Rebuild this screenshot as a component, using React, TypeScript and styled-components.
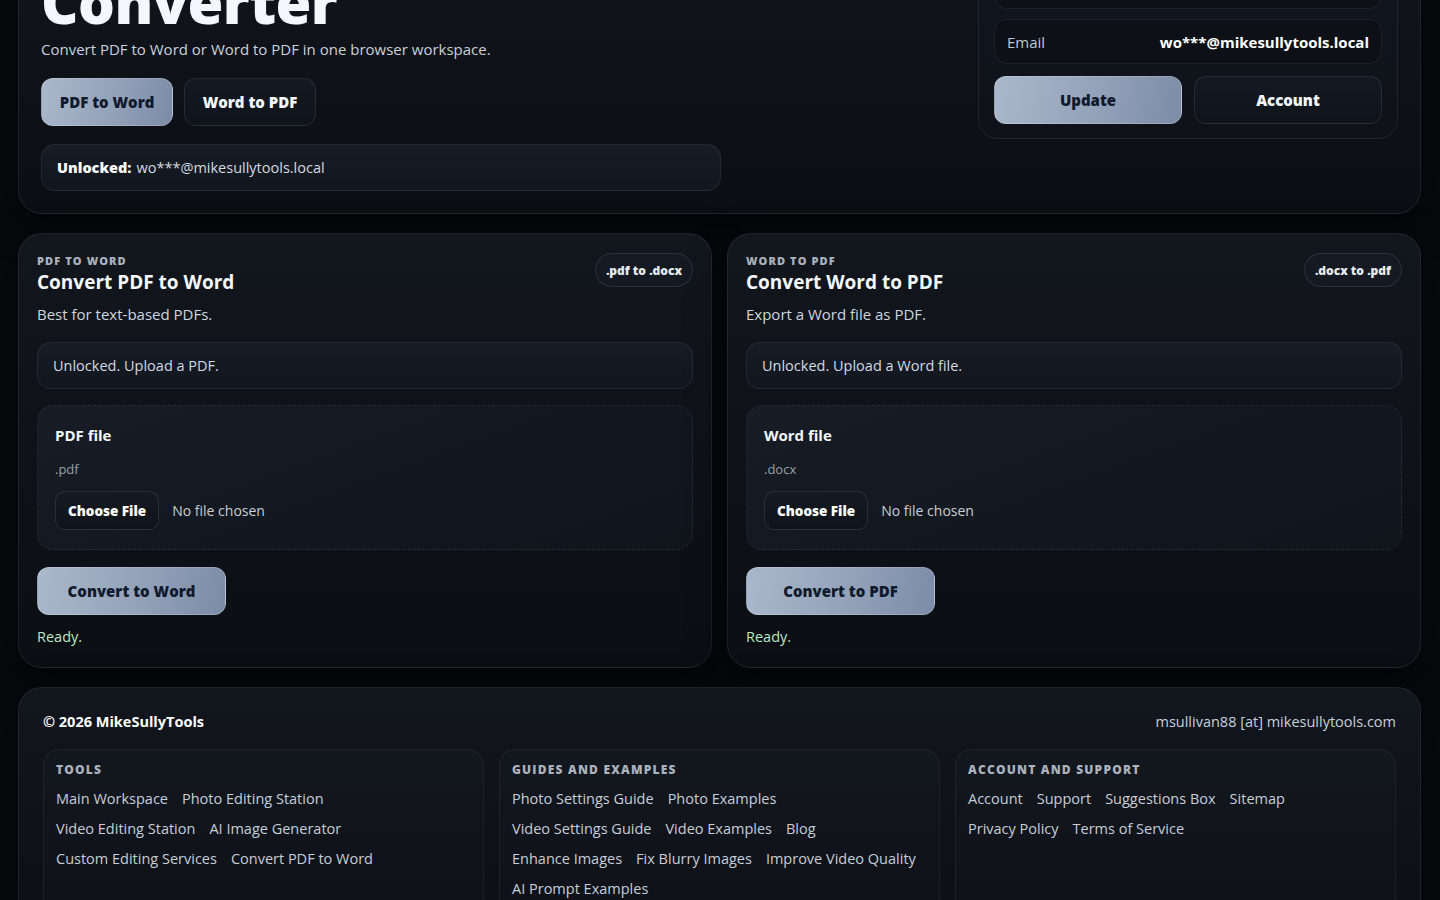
import styled, { createGlobalStyle } from 'styled-components'

const GlobalStyle = createGlobalStyle`
  * {
    box-sizing: border-box;
  }

  body {
    margin: 0;
    background: #07090d;
    color: #eef2f7;
    font-family: 'Open Sans', 'Noto Sans', sans-serif;
  }
`

// the reference is photographed a little way down the page
const Page = styled.div`
  display: flex;
  flex-direction: column;
  gap: 19px;
  padding: 0 19px 40px 18px;
  margin-top: -74px;
`

const Card = styled.section`
  border: 1px solid rgba(255, 255, 255, 0.08);
  border-radius: 24px;
  background: linear-gradient(180deg, #12161d 0%, #0b0e13 100%);
  box-shadow: 0 12px 40px rgba(0, 0, 0, 0.45);
`

const Hero = styled(Card)`
  display: grid;
  grid-template-columns: 680px 1fr;
  padding: 22px 22px 22px 22px;
`

const HeroMain = styled.div`
  display: flex;
  flex-direction: column;
`

const Eyebrow = styled.div`
  font-size: 11px;
  line-height: 14px;
  font-weight: 800;
  letter-spacing: 0.1em;
  text-transform: uppercase;
  color: #aab2be;
`

const Title = styled.h1`
  margin: 8px 0 0;
  font-size: 58px;
  line-height: 62px;
  font-weight: 800;
  letter-spacing: -0.01em;
  color: #f4f7fb;
`

const Subtitle = styled.p`
  margin: 4px 0 0;
  font-size: 15px;
  line-height: 24px;
  color: #c9d1dc;
`

const Tabs = styled.div`
  display: flex;
  gap: 11px;
  margin-top: 17px;
`

const Button = styled.button<{ $primary?: boolean }>`
  height: 48px;
  padding: 0 16px;
  border-radius: 12px;
  font-family: inherit;
  font-size: 15px;
  font-weight: 800;
  cursor: pointer;
  border: 1px solid
    ${(p) => (p.$primary ? 'rgba(255, 255, 255, 0.18)' : 'rgba(255, 255, 255, 0.09)')};
  background: ${(p) =>
    p.$primary
      ? 'linear-gradient(100deg, #aab8cc 0%, #93a2b9 55%, #7d8ca6 100%)'
      : 'linear-gradient(180deg, #151a22 0%, #0f131a 100%)'};
  color: ${(p) => (p.$primary ? '#0f1a2d' : '#f4f7fb')};
`

const TabButton = styled(Button)`
  width: 132px;
  padding: 0;
`

const InfoBox = styled.div`
  display: flex;
  align-items: center;
  min-height: 47px;
  padding: 0 15px;
  border: 1px solid rgba(255, 255, 255, 0.07);
  border-radius: 14px;
  background: linear-gradient(180deg, #171c25 0%, #12161e 100%);
  font-size: 14.5px;
  color: #d3dae3;
`

const UnlockBox = styled(InfoBox)`
  margin-top: 18px;

  strong {
    color: #ffffff;
    font-weight: 800;
    margin-right: 5px;
  }
`

const AccountPanel = styled.div`
  justify-self: end;
  align-self: start;
  width: 420px;
  display: flex;
  flex-direction: column;
  gap: 10px;
  padding: 14px 15px;
  border: 1px solid rgba(255, 255, 255, 0.07);
  border-radius: 20px;
  background: linear-gradient(180deg, #121720 0%, #0e1117 100%);
`

const PanelRow = styled.div`
  display: flex;
  align-items: center;
  justify-content: space-between;
  height: 45px;
  padding: 0 12px;
  border: 1px solid rgba(255, 255, 255, 0.07);
  border-radius: 13px;
  background: #0d1016;
  font-size: 15px;
`

const RowLabel = styled.span`
  color: #bfc7d2;
`

const RowValue = styled.span`
  font-weight: 700;
  color: #ffffff;
`

const PanelActions = styled.div`
  display: grid;
  grid-template-columns: 1fr 1fr;
  gap: 12px;
  margin-top: 2px;
`

const ToolGrid = styled.div`
  display: grid;
  grid-template-columns: 1fr 1fr;
  gap: 15px;
`

const ToolCard = styled(Card)`
  display: flex;
  flex-direction: column;
  gap: 16px;
  padding: 20px 18px 19px;
`

const ToolHeader = styled.div`
  display: flex;
  justify-content: space-between;
  align-items: flex-start;
`

const ToolTitle = styled.h2`
  margin: 1px 0 0;
  font-size: 19px;
  line-height: 26px;
  font-weight: 700;
  color: #f4f7fb;
`

const ToolDesc = styled.p`
  margin: 7px 0 0;
  font-size: 15px;
  line-height: 24px;
  color: #cfd6df;
`

const Badge = styled.span`
  display: inline-flex;
  align-items: center;
  height: 34px;
  padding: 0 10px;
  border: 1px solid rgba(255, 255, 255, 0.1);
  border-radius: 999px;
  background: #151a22;
  font-size: 12px;
  font-weight: 800;
  color: #e6ebf2;
  margin-top: -1px;
`

const FileBox = styled.div`
  display: flex;
  flex-direction: column;
  padding: 18px 17px 19px;
  border: 1px dashed rgba(255, 255, 255, 0.08);
  border-radius: 16px;
  background: linear-gradient(160deg, #171c25 0%, #10141b 100%);
`

const FileLabel = styled.div`
  font-size: 15px;
  line-height: 22px;
  font-weight: 700;
  color: #f4f7fb;
`

const FileHint = styled.div`
  margin-top: 14px;
  font-size: 13px;
  line-height: 18px;
  color: #98a1ad;
`

const FileInput = styled.input`
  margin-top: 13px;
  font-family: inherit;
  font-size: 14px;
  color: #c7ced8;

  &::file-selector-button {
    height: 39px;
    padding: 0 12px;
    margin-right: 13px;
    border: 1px solid rgba(255, 255, 255, 0.1);
    border-radius: 10px;
    background: linear-gradient(180deg, #161b23 0%, #0f131a 100%);
    color: #ffffff;
    font-family: inherit;
    font-size: 13.5px;
    font-weight: 800;
    cursor: pointer;
  }
`

const ConvertButton = styled(Button)`
  width: 189px;
  padding: 0;
  margin-top: 1px;
`

const Ready = styled.div`
  margin-top: -5px;
  font-size: 14.5px;
  line-height: 22px;
  color: #b9e8c8;
`

const Footer = styled(Card)`
  display: flex;
  flex-direction: column;
  gap: 17px;
  padding: 24px 24px 30px 24px;
`

const FooterTop = styled.div`
  display: flex;
  justify-content: space-between;
  align-items: center;
  font-size: 14.5px;
  line-height: 20px;
`

const Copyright = styled.div`
  font-weight: 700;
  color: #ffffff;
`

const Contact = styled.div`
  color: #c8d0da;
`

const FooterColumns = styled.div`
  display: grid;
  grid-template-columns: repeat(3, 1fr);
  gap: 15px;
`

const FooterColumn = styled.nav`
  display: flex;
  flex-direction: column;
  gap: 8px;
  min-height: 200px;
  padding: 12px 12px;
  border: 1px solid rgba(255, 255, 255, 0.06);
  border-radius: 16px;
  background: linear-gradient(180deg, #13171e 0%, #0d1016 100%);
`

const ColumnHeading = styled(Eyebrow)`
  font-size: 12px;
  line-height: 16px;
  margin-bottom: 2px;
`

const LinkRow = styled.div`
  display: flex;
  gap: 14px;
  font-size: 14.5px;
  line-height: 22px;
`

const FooterLink = styled.a`
  color: #c6ceda;
  text-decoration: none;
  white-space: nowrap;
`

const tools = [
  {
    eyebrow: 'PDF to Word',
    title: 'Convert PDF to Word',
    desc: 'Best for text-based PDFs.',
    badge: '.pdf to .docx',
    status: 'Unlocked. Upload a PDF.',
    label: 'PDF file',
    accept: '.pdf',
    action: 'Convert to Word',
  },
  {
    eyebrow: 'Word to PDF',
    title: 'Convert Word to PDF',
    desc: 'Export a Word file as PDF.',
    badge: '.docx to .pdf',
    status: 'Unlocked. Upload a Word file.',
    label: 'Word file',
    accept: '.docx',
    action: 'Convert to PDF',
  },
]

const footerColumns = [
  {
    heading: 'Tools',
    rows: [
      ['Main Workspace', 'Photo Editing Station'],
      ['Video Editing Station', 'AI Image Generator'],
      ['Custom Editing Services', 'Convert PDF to Word'],
    ],
  },
  {
    heading: 'Guides and examples',
    rows: [
      ['Photo Settings Guide', 'Photo Examples'],
      ['Video Settings Guide', 'Video Examples', 'Blog'],
      ['Enhance Images', 'Fix Blurry Images', 'Improve Video Quality'],
      ['AI Prompt Examples'],
    ],
  },
  {
    heading: 'Account and support',
    rows: [
      ['Account', 'Support', 'Suggestions Box', 'Sitemap'],
      ['Privacy Policy', 'Terms of Service'],
    ],
  },
]

export default function App() {
  return (
    <>
      <GlobalStyle />
      <Page>
        <Hero>
          <HeroMain>
            <Eyebrow>MikeSullyTools</Eyebrow>
            <Title>Converter</Title>
            <Subtitle>Convert PDF to Word or Word to PDF in one browser workspace.</Subtitle>
            <Tabs>
              <TabButton $primary>PDF to Word</TabButton>
              <TabButton>Word to PDF</TabButton>
            </Tabs>
            <UnlockBox>
              <strong>Unlocked:</strong> wo***@mikesullytools.local
            </UnlockBox>
          </HeroMain>
          <AccountPanel>
            <PanelRow>
              <RowLabel>Status</RowLabel>
              <RowValue>Unlocked</RowValue>
            </PanelRow>
            <PanelRow>
              <RowLabel>Email</RowLabel>
              <RowValue>wo***@mikesullytools.local</RowValue>
            </PanelRow>
            <PanelActions>
              <Button $primary>Update</Button>
              <Button>Account</Button>
            </PanelActions>
          </AccountPanel>
        </Hero>

        <ToolGrid>
          {tools.map((tool) => (
            <ToolCard key={tool.title}>
              <ToolHeader>
                <div>
                  <Eyebrow>{tool.eyebrow}</Eyebrow>
                  <ToolTitle>{tool.title}</ToolTitle>
                  <ToolDesc>{tool.desc}</ToolDesc>
                </div>
                <Badge>{tool.badge}</Badge>
              </ToolHeader>
              <InfoBox>{tool.status}</InfoBox>
              <FileBox>
                <FileLabel>{tool.label}</FileLabel>
                <FileHint>{tool.accept}</FileHint>
                <FileInput type="file" accept={tool.accept} />
              </FileBox>
              <ConvertButton $primary>{tool.action}</ConvertButton>
              <Ready>Ready.</Ready>
            </ToolCard>
          ))}
        </ToolGrid>

        <Footer as="footer">
          <FooterTop>
            <Copyright>© 2026 MikeSullyTools</Copyright>
            <Contact>msullivan88 [at] mikesullytools.com</Contact>
          </FooterTop>
          <FooterColumns>
            {footerColumns.map((col) => (
              <FooterColumn key={col.heading}>
                <ColumnHeading>{col.heading}</ColumnHeading>
                {col.rows.map((row, i) => (
                  <LinkRow key={i}>
                    {row.map((link) => (
                      <FooterLink key={link} href="#">
                        {link}
                      </FooterLink>
                    ))}
                  </LinkRow>
                ))}
              </FooterColumn>
            ))}
          </FooterColumns>
        </Footer>
      </Page>
    </>
  )
}
